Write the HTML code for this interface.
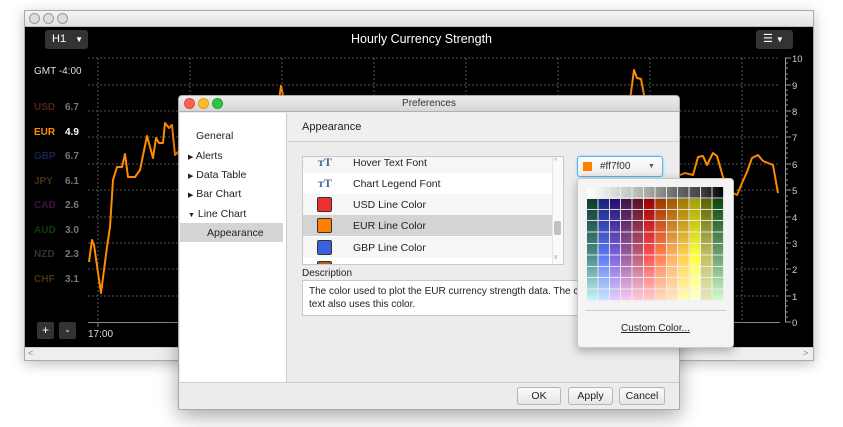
<!DOCTYPE html>
<html><head><meta charset="utf-8"><style>
*{box-sizing:border-box;margin:0;padding:0}
body{width:843px;height:427px;background:#fff;position:relative;overflow:hidden;font-family:"Liberation Sans",Arial,sans-serif}
.a{position:absolute}
.lbl{position:absolute;font-size:10px;font-weight:bold}
.tl{position:absolute;width:11px;height:11px;border-radius:50%}
.tree{position:absolute;font-size:10.5px;color:#222}
.row{position:absolute;left:0;width:252px;height:21px;font-size:10.5px;color:#222}
.sw{position:absolute;left:14px;top:3px;width:15px;height:15px;border:1px solid #333;border-radius:2px}
.btn{position:absolute;top:387px;height:18px;border:1px solid #b5b5b5;border-radius:3px;background:linear-gradient(#fafafa,#e6e6e6);font-size:10.5px;text-align:center;line-height:16px;color:#222}
</style></head><body>
<div class="a" style="left:24px;top:10px;width:790px;height:351px;background:#000;border:1px solid #aaa;box-shadow:0 3px 12px rgba(0,0,0,.25)"></div>
<div class="a" style="left:25px;top:11px;width:788px;height:16px;background:linear-gradient(#f4f4f4,#e2e2e2);border-bottom:1px solid #bbb"></div>
<div class="tl" style="left:29px;top:13px;border:1px solid #999;background:#ddd"></div>
<div class="tl" style="left:43px;top:13px;border:1px solid #999;background:#ddd"></div>
<div class="tl" style="left:57px;top:13px;border:1px solid #999;background:#ddd"></div>
<div class="a" style="left:25px;top:347px;width:788px;height:13px;background:#eee;border-top:1px solid #ccc"></div>
<div class="a" style="left:28px;top:348px;font-size:9px;color:#888">&lt;</div>
<div class="a" style="left:803px;top:348px;font-size:9px;color:#888">&gt;</div>
<div class="a" style="left:45px;top:30px;width:43px;height:19px;background:#333;border-radius:3px;color:#fff;font-size:11px;line-height:19px;padding-left:7px">H1 <span style="font-size:8px;margin-left:6px">▼</span></div>
<div class="a" style="left:756px;top:30px;width:37px;height:19px;background:#333;border-radius:3px;color:#fff;font-size:11px;line-height:19px;padding-left:7px">☰ <span style="font-size:8px">▼</span></div>
<div class="a" style="left:0;width:843px;top:32px;text-align:center;color:#fff;font-size:12.5px">Hourly Currency Strength</div>
<div class="a" style="left:34px;top:66px;color:#ddd;font-size:10px">GMT -4:00</div>
<div class="lbl" style="left:34px;top:102px;color:#5a2010">USD</div><div class="lbl" style="left:65px;top:102px;color:#777">6.7</div>
<div class="lbl" style="left:34px;top:127px;color:#ff8c00">EUR</div><div class="lbl" style="left:65px;top:127px;color:#fff">4.9</div>
<div class="lbl" style="left:34px;top:151px;color:#1a2250">GBP</div><div class="lbl" style="left:65px;top:151px;color:#777">6.7</div>
<div class="lbl" style="left:34px;top:176px;color:#4a3010">JPY</div><div class="lbl" style="left:65px;top:176px;color:#777">6.1</div>
<div class="lbl" style="left:34px;top:200px;color:#3d163d">CAD</div><div class="lbl" style="left:65px;top:200px;color:#777">2.6</div>
<div class="lbl" style="left:34px;top:225px;color:#0c3d0e">AUD</div><div class="lbl" style="left:65px;top:225px;color:#777">3.0</div>
<div class="lbl" style="left:34px;top:249px;color:#333">NZD</div><div class="lbl" style="left:65px;top:249px;color:#777">2.3</div>
<div class="lbl" style="left:34px;top:274px;color:#4a3010">CHF</div><div class="lbl" style="left:65px;top:274px;color:#777">3.1</div>
<div class="a" style="left:37px;top:322px;width:17px;height:17px;background:#333;border-radius:2px;color:#fff;font-size:12px;text-align:center;line-height:17px">+</div>
<div class="a" style="left:59px;top:322px;width:17px;height:17px;background:#333;border-radius:2px;color:#fff;font-size:12px;text-align:center;line-height:17px">-</div>
<div class="a" style="left:88px;top:329px;color:#ddd;font-size:10px">17:00</div>
<svg class="a" style="left:0;top:0" width="843" height="427">
<g stroke="#555" stroke-dasharray="2,2" stroke-width="1">
<line x1="88" y1="58" x2="780" y2="58"/><line x1="88" y1="85" x2="780" y2="85"/><line x1="88" y1="111" x2="780" y2="111"/><line x1="88" y1="137" x2="780" y2="137"/><line x1="88" y1="164" x2="780" y2="164"/><line x1="88" y1="190" x2="780" y2="190"/><line x1="88" y1="217" x2="780" y2="217"/><line x1="88" y1="243" x2="780" y2="243"/><line x1="88" y1="269" x2="780" y2="269"/><line x1="88" y1="296" x2="780" y2="296"/>
<line x1="98" y1="58" x2="98" y2="322"/><line x1="190" y1="58" x2="190" y2="322"/><line x1="282" y1="58" x2="282" y2="322"/><line x1="374" y1="58" x2="374" y2="322"/><line x1="466" y1="58" x2="466" y2="322"/><line x1="558" y1="58" x2="558" y2="322"/><line x1="650" y1="58" x2="650" y2="322"/><line x1="742" y1="58" x2="742" y2="322"/>
</g>
<line x1="88" y1="322.5" x2="780" y2="322.5" stroke="#888"/>
<line x1="98" y1="322" x2="98" y2="327" stroke="#888"/>
<line x1="785.5" y1="58" x2="785.5" y2="322" stroke="#999"/>
<g stroke="#999">
<path d="M785 58h6M785 85h6M785 111h6M785 137h6M785 164h6M785 190h6M785 217h6M785 243h6M785 269h6M785 296h6M785 322h6"/>
<path d="M785 63h3M785 68h3M785 74h3M785 79h3M785 90h3M785 95h3M785 100h3M785 105h3M785 116h3M785 121h3M785 127h3M785 132h3M785 143h3M785 148h3M785 153h3M785 158h3M785 169h3M785 174h3M785 180h3M785 185h3M785 196h3M785 201h3M785 206h3M785 211h3M785 222h3M785 227h3M785 233h3M785 238h3M785 248h3M785 253h3M785 259h3M785 264h3M785 275h3M785 280h3M785 285h3M785 290h3M785 301h3M785 306h3M785 312h3M785 317h3"/>
</g>
<g fill="#ccc" font-size="9.5" font-family="Liberation Sans">
<text x="792" y="62">10</text><text x="792" y="89">9</text><text x="792" y="115">8</text><text x="792" y="141">7</text><text x="792" y="168">6</text><text x="792" y="194">5</text><text x="792" y="221">4</text><text x="792" y="247">3</text><text x="792" y="273">2</text><text x="792" y="300">1</text><text x="792" y="326">0</text>
</g>
<polyline fill="none" stroke="#ff8c00" stroke-width="2" stroke-linejoin="round" points="89,262 92,240 94,245 101,293 107,247 110,227 113,180 117,167 122,167 125,154 128,177 135,177 140,170 147,136 153,158 156,138 159,143 163,143 165,123 169,128 172,125 175,155 180,150 230,140 270,110 279,100 281,86 284,100 300,140"/>
<polyline fill="none" stroke="#ff8c00" stroke-width="2" stroke-linejoin="round" points="620,150 630,100 634,70 637,78 641,79 645,100 660,160 680,175 685,173 693,175 698,157 703,156 707,165 713,153 717,156 723,177 733,193 737,195 742,183 747,172 752,158 758,155 763,161 768,163 773,165 778,193"/>
</svg>
<div class="a" style="left:178px;top:95px;width:502px;height:315px;background:#ececec;border:1px solid #aaa;border-radius:4px 4px 0 0;box-shadow:0 6px 20px rgba(0,0,0,.35)"></div>
<div class="a" style="left:179px;top:96px;width:500px;height:16px;background:linear-gradient(#ececec,#d6d6d6);border-bottom:1px solid #b0b0b0;border-radius:4px 4px 0 0;text-align:center;font-size:10px;line-height:16px;color:#333">Preferences</div>
<div class="tl" style="left:184px;top:98px;background:#fc5f57;border:1px solid #de4a42"></div>
<div class="tl" style="left:198px;top:98px;background:#fdbc2e;border:1px solid #dd9e1e"></div>
<div class="tl" style="left:212px;top:98px;background:#2ac840;border:1px solid #1ca630"></div>
<div class="a" style="left:180px;top:113px;width:107px;height:269px;background:#fff;border-right:1px solid #ccc"></div>
<div class="tree" style="left:196px;top:130px">General</div>
<div class="tree" style="left:188px;top:150px"><span style="font-size:7px">▶</span> Alerts</div>
<div class="tree" style="left:188px;top:169px"><span style="font-size:7px">▶</span> Data Table</div>
<div class="tree" style="left:188px;top:188px"><span style="font-size:7px">▶</span> Bar Chart</div>
<div class="tree" style="left:188px;top:208px"><span style="font-size:7px">▼</span> Line Chart</div>
<div class="a" style="left:180px;top:223px;width:103px;height:19px;background:#d4d4d4"></div>
<div class="tree" style="left:207px;top:227px">Appearance</div>
<div class="a" style="left:288px;top:113px;width:391px;height:29px;border-bottom:1px solid #d0d0d0;background:#efefef;font-size:11px;line-height:29px;padding-left:14px;color:#222">Appearance</div>
<div class="a" style="left:302px;top:156px;width:262px;height:109px;background:#fff;border:1px solid #c8c8c8;overflow:hidden">
 <div class="row" style="top:-5px;background:#f6f6f6"><span class="a" style="left:15px;top:3px;color:#4a6a9a;font-family:'Liberation Serif';font-weight:bold;font-size:12px">ᴛT</span><span class="a" style="left:50px;top:5px">Hover Text Font</span></div>
 <div class="row" style="top:16px"><span class="a" style="left:15px;top:3px;color:#4a6a9a;font-family:'Liberation Serif';font-weight:bold;font-size:12px">ᴛT</span><span class="a" style="left:50px;top:5px">Chart Legend Font</span></div>
 <div class="row" style="top:37px;background:#f6f6f6"><div class="sw" style="background:#f03030"></div><span class="a" style="left:50px;top:5px">USD Line Color</span></div>
 <div class="row" style="top:58px;background:#d4d4d4"><div class="sw" style="background:#ff8000"></div><span class="a" style="left:50px;top:5px">EUR Line Color</span></div>
 <div class="row" style="top:80px;background:#f6f6f6"><div class="sw" style="background:#3a60e0"></div><span class="a" style="left:50px;top:5px">GBP Line Color</span></div>
 <div class="row" style="top:101px"><div class="sw" style="background:#b06010"></div></div>
 <div class="a" style="left:249px;top:0;width:12px;height:107px;background:#fafafa;border-left:1px solid #e5e5e5"></div>
 <div class="a" style="left:251px;top:64px;width:7px;height:14px;background:#c2c2c2;border-radius:2px"></div>
 <div class="a" style="left:251px;top:1px;font-size:7px;color:#999">^</div>
 <div class="a" style="left:251px;top:97px;font-size:7px;color:#999">v</div>
</div>
<div class="a" style="left:302px;top:268px;font-size:10px;color:#222">Description</div>
<div class="a" style="left:302px;top:280px;width:300px;height:36px;background:#fff;border:1px solid #c8c8c8;font-size:10px;color:#222;padding:4px 6px;line-height:13px;white-space:nowrap;overflow:hidden">The color used to plot the EUR currency strength data. The chart<br>text also uses this color.</div>
<div class="a" style="left:179px;top:382px;width:500px;height:1px;background:#ccc"></div>
<div class="btn" style="left:517px;width:44px">OK</div>
<div class="btn" style="left:568px;width:45px">Apply</div>
<div class="btn" style="left:619px;width:46px">Cancel</div>
<div class="a" style="left:577px;top:156px;width:86px;height:21px;border:1px solid #5ab4e6;border-radius:3px;background:linear-gradient(#fdfdfd,#ececec);box-shadow:0 0 2px #7cc4f0;font-size:10px;line-height:19px;color:#333;padding-left:22px">#ff7f00<span class="a" style="left:70px;top:0;font-size:7px;color:#555">▼</span></div>
<div class="a" style="left:583px;top:162px;width:9px;height:9px;background:#ff7f00"></div>
<div class="a" style="left:577px;top:178px;width:157px;height:170px;background:#f4f4f4;border:1px solid #c8c8c8;border-radius:4px;box-shadow:0 3px 10px rgba(0,0,0,.3)"></div>
<div class="a" style="left:587px;top:187px;width:137px;height:12px;background:linear-gradient(90deg,#fff 0%,#f2f2f2 9%,#e0e0e0 17%,#c4c4c4 33%,#999 50%,#666 66%,#444 83%,#000 100%)"></div>
<div class="a" style="left:587px;top:199px;width:137px;height:102px;display:flex">
<div style="flex:1;background:linear-gradient(#0d3b2e,#4a8a8a 55%,#c8f8ff)"></div>
<div style="flex:1;background:linear-gradient(#1a1f7a,#5a78f0 55%,#cde6ff)"></div>
<div style="flex:1;background:linear-gradient(#20106e,#7a60e0 55%,#e3d3ff)"></div>
<div style="flex:1;background:linear-gradient(#3d1245,#9a5aa0 55%,#f8ccf8)"></div>
<div style="flex:1;background:linear-gradient(#5a0f25,#c05a78 55%,#ffd0e0)"></div>
<div style="flex:1;background:linear-gradient(#9a0000,#ff5050 55%,#ffd0d0)"></div>
<div style="flex:1;background:linear-gradient(#a03800,#ff8050 55%,#ffe0c8)"></div>
<div style="flex:1;background:linear-gradient(#a05800,#ffb060 55%,#ffe8c8)"></div>
<div style="flex:1;background:linear-gradient(#a07800,#ffd050 55%,#ffffc0)"></div>
<div style="flex:1;background:linear-gradient(#a0a000,#ffff40 55%,#ffffd8)"></div>
<div style="flex:1;background:linear-gradient(#5a6400,#c0c060 55%,#e8e8c0)"></div>
<div style="flex:1;background:linear-gradient(#0a4a10,#70a070 55%,#d0ffd0)"></div>
</div>
<div class="a" style="left:587px;top:187px;width:137px;height:114px;background:repeating-linear-gradient(90deg,transparent 0 10.4px,rgba(240,240,240,.9) 10.4px 11.4px),repeating-linear-gradient(180deg,transparent 0 10.4px,rgba(240,240,240,.9) 10.4px 11.4px)"></div>
<div class="a" style="left:585px;top:310px;width:141px;height:1px;background:#ccc"></div>
<div class="a" style="left:577px;top:323px;width:157px;text-align:center;font-size:10px;color:#222;text-decoration:underline">Custom Color...</div>
</body></html>
